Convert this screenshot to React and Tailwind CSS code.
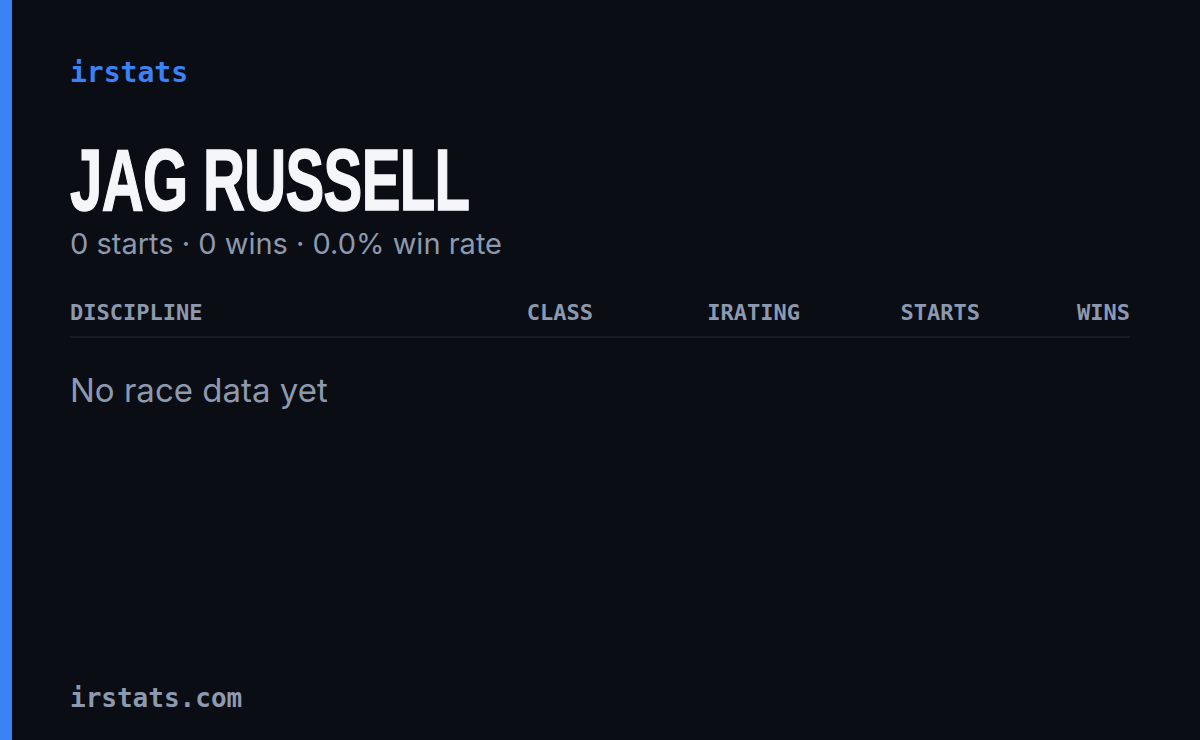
export default function App() {
  const cols = ['CLASS', 'IRATING', 'STARTS', 'WINS']

  return (
    <div className="flex h-[740px] w-[1200px] bg-[#0a0d14]">
      <div className="w-3 shrink-0 bg-[#3b82f6]" />
      <div className="flex flex-1 flex-col pl-[58px] pr-[70px] pt-[53px] pb-[24px]">
        <div className="font-['DejaVu_Sans_Mono',monospace] text-[28px] font-bold leading-[40px] text-[#3b82f6]">
          irstats
        </div>

        <h1 className="mt-[44px] origin-left scale-x-[0.66] whitespace-nowrap font-['Liberation_Sans',sans-serif] text-[88px] font-bold leading-[86px] tracking-[-1px] text-[#f5f6fa] [-webkit-text-stroke:1.5px_#f5f6fa]">
          JAG RUSSELL
        </h1>
        <div className="mt-[3px] font-['Inter',sans-serif] text-[29px] leading-[36px] text-[#8d99ae]">
          0 starts · 0 wins · 0.0% win rate
        </div>

        <div className="mt-[38px] grid grid-cols-[1fr_150px_207px_180px_150px] border-b-2 border-[#151a24] pb-[10px] font-['DejaVu_Sans_Mono',monospace] text-[22px] font-bold leading-[26px] text-[#8d99ae]">
          <div>DISCIPLINE</div>
          {cols.map(c => (
            <div key={c} className="text-right">{c}</div>
          ))}
        </div>

        <div className="mt-[31px] font-['Inter',sans-serif] text-[33px] leading-[42px] text-[#8d99ae]">
          No race data yet
        </div>

        <div className="mt-auto font-['DejaVu_Sans_Mono',monospace] text-[26px] font-bold leading-[36px] text-[#8d99ae]">
          irstats.com
        </div>
      </div>
    </div>
  )
}
